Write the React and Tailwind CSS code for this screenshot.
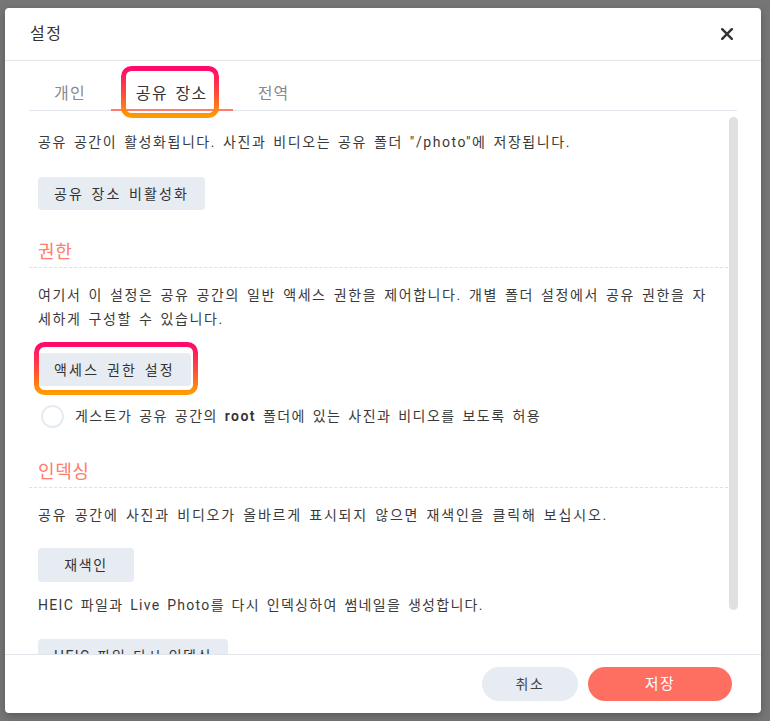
import React from "react";

function Highlight({ w, h, className }) {
  const id = "hg" + w + h;
  return (
    <svg
      className={"absolute pointer-events-none " + className}
      width={w}
      height={h}
      viewBox={`0 0 ${w} ${h}`}
    >
      <defs>
        <linearGradient id={id} x1="0" y1="0" x2="0" y2="1">
          <stop offset="0" stopColor="#ff0a6c" />
          <stop offset="0.55" stopColor="#ff4f3a" />
          <stop offset="1" stopColor="#ff9a00" />
        </linearGradient>
      </defs>
      <rect
        x="2.5"
        y="2.5"
        width={w - 5}
        height={h - 5}
        rx="8"
        ry="8"
        fill="none"
        stroke={`url(#${id})`}
        strokeWidth="5"
      />
    </svg>
  );
}

function Btn({ children, className = "" }) {
  return (
    <div
      className={
        "h-[33px] min-w-[96px] px-4 rounded bg-[#e7ebf2] text-sm text-[#333] flex items-center justify-center self-start " +
        className
      }
    >
      {children}
    </div>
  );
}

function Heading({ children, className = "" }) {
  return (
    <div
      className={
        "pl-[9px] pb-[2px] leading-[26px] text-[18px] tracking-[0.6px] text-[#ff7b6b] border-b border-dashed border-[#d9e1ea] " +
        className
      }
    >
      {children}
    </div>
  );
}

export default function App() {
  return (
    <div className="w-[770px] h-[721px] bg-[#767676] pl-[5px] pt-[8px] overflow-hidden font-[Roboto,'Noto_Sans_CJK_KR',sans-serif] [word-spacing:2px]">
      <div className="w-[756px] h-[705px] bg-white rounded-[4px] flex flex-col shadow-[0_3px_8px_rgba(0,0,0,0.25)]">
        {/* header */}
        <div className="h-[53px] shrink-0 flex items-center justify-between pl-[25px] pr-[28px] border-b border-[#e3e7ec]">
          <div className="text-base tracking-[1.5px] text-[#333]">설정</div>
          <svg width="12" height="12" viewBox="0 0 12 12">
            <path
              d="M1.2 1.2 L10.8 10.8 M10.8 1.2 L1.2 10.8"
              stroke="#333"
              strokeWidth="2.4"
              strokeLinecap="round"
            />
          </svg>
        </div>

        {/* tabs */}
        <div className="h-[50px] shrink-0 mx-6 flex items-end border-b border-[#e3e7ee]">
          <div className="px-[25px] pb-[3px] leading-6 text-base tracking-[1.2px] text-[#8a8a8a] border-b-2 border-transparent -mb-px">
            개인
          </div>
          <div className="relative px-[25px] pb-[3px] leading-6 text-base tracking-[1.4px] text-[#333] border-b-2 border-[#ff7b6b] -mb-px">
            공유 장소
            <Highlight w={98} h={52} className="left-[10px] top-[-16px]" />
          </div>
          <div className="px-[25px] pb-[3px] leading-6 text-base tracking-[1.2px] text-[#8a8a8a] border-b-2 border-transparent -mb-px">
            전역
          </div>
        </div>

        {/* content */}
        <div className="flex-1 min-h-0 flex ml-6 mr-[23px]">
          <div className="flex-1 min-w-0 overflow-hidden flex flex-col text-sm text-[#3a3a3a] pr-px">
            <div className="pl-[9px] pr-[16px] pt-[19px] leading-6 tracking-[1.55px]">
              공유 공간이 활성화됩니다. 사진과 비디오는 공유 폴더 "/photo"에 저장됩니다.
            </div>
            <div className="pl-[9px] mt-[23px] flex">
              <Btn className="tracking-[2.1px]">공유 장소 비활성화</Btn>
            </div>

            <Heading className="mt-[29px]">권한</Heading>
            <div className="pl-[9px] pr-[16px] mt-[15px] leading-6 tracking-[1.6px] break-all">
              여기서 이 설정은 공유 공간의 일반 액세스 권한을 제어합니다. 개별 폴더 설정에서 공유 권한을 자세하게 구성할 수 있습니다.
            </div>
            <div className="pl-[9px] mt-[22px] flex">
              <div className="relative">
                <Btn className="tracking-[2.2px]">액세스 권한 설정</Btn>
                <Highlight w={164} h={53} className="left-[-4px] top-[-11px]" />
              </div>
            </div>
            <div className="pl-[12px] mt-[18px] h-6 flex items-center gap-[11px]">
              <div className="w-[23px] h-[23px] rounded-full border-2 border-[#e6ebf2] bg-white shrink-0" />
              <div className="leading-6 tracking-[1.45px]">
                게스트가 공유 공간의 <span className="font-semibold text-[#333]">root</span> 폴더에 있는 사진과 비디오를 보도록 허용
              </div>
            </div>

            <Heading className="mt-[31px]">인덱싱</Heading>
            <div className="pl-[9px] pr-[16px] mt-[15px] leading-6 tracking-[1.8px]">
              공유 공간에 사진과 비디오가 올바르게 표시되지 않으면 재색인을 클릭해 보십시오.
            </div>
            <div className="pl-[9px] mt-[21px] flex">
              <Btn className="h-[34px] tracking-[1.7px]">재색인</Btn>
            </div>
            <div className="pl-[9px] pr-[16px] mt-[11px] leading-6 tracking-[1.3px]">
              HEIC 파일과 Live Photo를 다시 인덱싱하여 썸네일을 생성합니다.
            </div>
            <div className="pl-[9px] mt-[22px] flex shrink-0">
              <Btn className="tracking-[1.45px]">HEIC 파일 다시 인덱싱</Btn>
            </div>
          </div>
          <div className="w-[9px] shrink-0">
            <div className="mt-[6px] h-[493px] rounded-full bg-[#e0e0e0]" />
          </div>
        </div>

        {/* footer */}
        <div className="h-[59px] shrink-0 border-t border-[#e1e6ed] flex justify-end items-start pt-[12px] pr-[29px] gap-[10px]">
          <div className="w-[96px] h-[34px] rounded-full bg-[#e7ebf2] text-sm tracking-[1.5px] text-[#444] flex items-center justify-center">
            취소
          </div>
          <div className="w-[144px] h-[34px] rounded-full bg-[#ff6f61] text-[15px] tracking-[1.5px] text-white flex items-center justify-center">
            저장
          </div>
        </div>
      </div>
    </div>
  );
}
